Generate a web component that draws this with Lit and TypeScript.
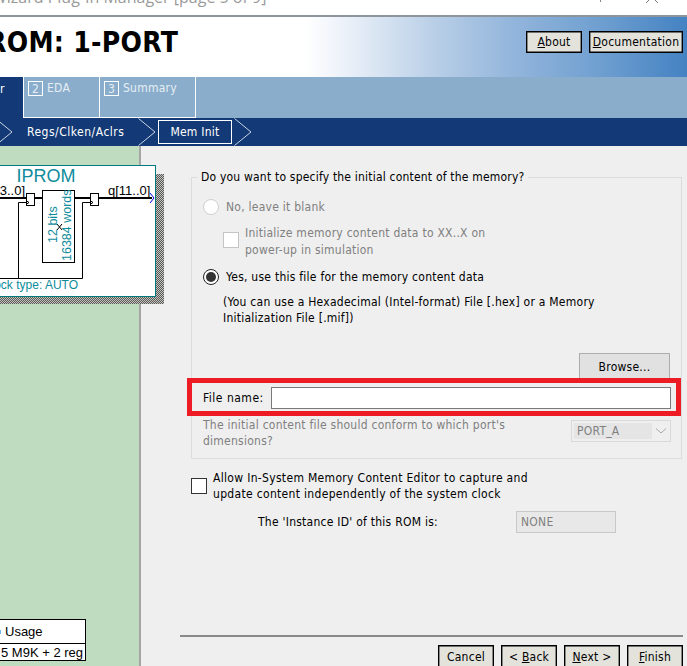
import { LitElement, html, css, svg } from "lit";
import { customElement } from "lit/decorators.js";

const chevron = svg`<svg class="chev" width="18" height="28" viewBox="0 0 18 28"><path d="M0.5 0.5 L17 14 L0.5 27.5" fill="none" stroke="#c9d3e2" stroke-width="1"/></svg>`;

@customElement("app-root")
export class AppRoot extends LitElement {
  static styles = css`
    :host { display: block; width: 687px; height: 666px; overflow: hidden; position: relative; background: #efefef;
      font: 12px/16px "DejaVu Sans Condensed", "DejaVu Sans", Tahoma, sans-serif; letter-spacing: 0.25px; color: #000; }
    * { box-sizing: border-box; }
    .titlebar { height: 17px; background: #fff; border-bottom: 2px solid #8e949c; overflow: hidden; display: flex; position: relative; }
    .titletext { font: 16px/20px "Open Sans", "Noto Sans", sans-serif; letter-spacing: 0; color: #9a9a9a; margin: -13px 0 0 -8px; white-space: nowrap; }
    .winctl { margin-left: auto; display: flex; align-items: flex-start; gap: 44px; padding-right: 29px; }
    .header { height: 60px; display: flex; align-items: center; gap: 7px; padding: 0 4px 10px 0;
      background: linear-gradient(90deg, #fff 0, #fff 305px, #eef3fa 340px, #b6cde6 440px, #94b6dc 510px, #6f9fd0 600px, #4482c2 687px); }
    .title { font: bold 28px/32px "DejaVu Sans Condensed", "DejaVu Sans", sans-serif; letter-spacing: 0.3px; margin: 1px auto 0 -13px; white-space: nowrap; }
    .btn { height: 22px; background: #e3e3dc; border: 1px solid #000; box-shadow: inset 0 0 0 0.4px #000; display: flex; align-items: center; justify-content: center; font: inherit; color: #000; padding: 0; }
    .btn u { text-underline-offset: 1px; }
    .about { width: 56px; }
    .docs { width: 94px; }
    .tabs { height: 41px; background: #8aadcb; display: flex; }
    .tab0 { width: 23px; background: #133a76; color: #fff; padding: 4px 0 0 0; }
    .tab { border: 1px solid #fff; border-width: 0 1px 1px 0; color: #e6edf4; display: flex; align-items: flex-start; padding: 4px 0 0 4px; gap: 4px; height: 41px; }
    .tab.t2 { width: 77px; border-left-width: 1px; }
    .tab.t3 { width: 96px; }
    .num { width: 15px; height: 15px; border: 1px solid #fff; display: flex; align-items: center; justify-content: center; }
    .tabname { line-height: 15px; }
    .nav { height: 28px; background: #133a76; color: #fff; display: flex; align-items: center; }
    .nav .chev { flex: none; display: block; }
    .first { margin-left: -5px; margin-right: 14px; }
    .regs { width: 111px; letter-spacing: 0.5px; }
    .mem { width: 74px; height: 24px; border: 1px solid #fff; display: flex; align-items: center; justify-content: center; margin: 0 2px 0 2px; }
    .body { height: 520px; display: grid; grid-template-columns: 139px 2px 1fr; }
    .left { background: #c0dcc0; position: relative; }
    .divider { background: #a6a6a6; }
    .diagram { position: absolute; left: 0; top: 19px; display: block; }
    .usage { position: absolute; left: -2px; top: 473px; width: 88px; height: 42px; background: #fff; border: 1px solid #000; font: 13px/20px "Liberation Sans", sans-serif; letter-spacing: 0; }
    .usage div { height: 23px; padding: 2px 0 0 6px; white-space: nowrap; }
    .usage div + div { height: 18px; padding: 0 0 0 2px; border-top: 1px solid #000; line-height: 18px; }
    .usage i { position: absolute; left: 1px; top: 10px; width: 1px; height: 4px; background: #6fb7e8; }
    .pane { display: flex; flex-direction: column; height: 520px; padding-top: 23px; }
    fieldset { margin: 0 5px 0 50px; padding: 0 10px 9px 11px; border: 1px solid #dcdcdc; height: 290px; min-width: 0; }
    legend { padding: 0 3px; margin-left: -5px; line-height: 16px; letter-spacing: 0.2px; }
    .row { display: flex; align-items: center; gap: 7px; }
    .muted { color: #808080; }
    .radio { width: 16px; height: 16px; border-radius: 50%; border: 1px solid #cfcfcf; background: #fff; flex: none; display: flex; align-items: center; justify-content: center; }
    .radio.on { border: 1px solid #222; background: #fff; }
    .radio.on::after { content: ""; width: 10px; height: 10px; border-radius: 50%; background: #333; }
    .r1 { margin-top: 14px; }
    .check { width: 16px; height: 16px; border: 1px solid #c4c4c4; background: #fff; flex: none; }
    .check.dark { border-color: #333; }
    .r2 { margin: 10px 0 0 20px; align-items: flex-start; gap: 6px; line-height: 17px; }
    .r2 .check { margin-top: 7px; }
    .r3 { margin-top: 10px; }
    .note { margin: 9px 0 0 20px; width: 440px; }
    .browse { width: 91px; height: 28px; background: #e1e1e1; border: 1px solid #adadad; margin: 27px 0 0 376px; display: flex; align-items: center; justify-content: center; }
    .filerow { display: flex; align-items: center; height: 22px; margin-top: 6px; position: relative; }
    .filelabel { width: 68px; flex: none; letter-spacing: 0.5px; }
    .file { width: 400px; height: 22px; background: #fff; border: 1px solid #7a7a7a; }
    .redbox { position: absolute; left: -16px; top: -9px; width: 494px; height: 38px; border: 5px solid #ed1c24; }
    .portrow { display: flex; justify-content: space-between; margin-top: 8px; }
    .porttext { width: 340px; }
    .select { width: 100px; height: 22px; margin: 3px 0 0 0; border: 1px solid #d9d9d9; background: #efefef; display: flex; align-items: center; padding: 2px; color: #808080; }
    .select span { width: 78px; height: 16px; background: #e5e5e5; padding-left: 3px; flex: none; }
    .select svg { margin-left: 3px; }
    .cap { margin: 11px 0 0 50px; display: flex; gap: 6px; align-items: center; letter-spacing: 0.32px; }
    .inst { display: flex; align-items: center; margin: 9px 0 0 117px; }
    .inst span { width: 258px; }
    .none { width: 100px; height: 22px; border: 1px solid #c8c8c8; background: #e8e8e8; color: #808080; padding: 2px 4px; }
    .foot { margin-top: auto; padding: 0 4px 0 39px; }
    .rule { height: 2px; background: #8a8a8a; }
    .btns { display: flex; justify-content: flex-end; gap: 7px; margin-top: 8px; height: 21px; }
    .btns .btn { width: 56px; height: 24px; }
  `;

  private diagram() {
    return svg`<svg class="diagram" width="164" height="140" viewBox="0 0 164 140">
      <defs><pattern id="dith" width="2" height="2" patternUnits="userSpaceOnUse">
        <rect width="2" height="2" fill="#c4c4bc"/><rect width="1" height="1" fill="#5a5a5a"/><rect x="1" y="1" width="1" height="1" fill="#5a5a5a"/>
      </pattern></defs>
      <rect x="0" y="9" width="164" height="130" fill="url(#dith)"/>
      <rect x="-4" y="0.5" width="159.5" height="131" fill="#fff" stroke="#007a7a"/>
      <g font-family="Liberation Sans, sans-serif" letter-spacing="0">
        <text x="46" y="17" font-size="18" fill="#0f8c9c" text-anchor="middle">IPROM</text>
        <text x="25" y="30" font-size="13" fill="#000" text-anchor="end">3..0]</text>
        <text x="108" y="30" font-size="13" fill="#000">q[11..0]</text>
        <path d="M0 33H26M34 33H42M74 33H90M98 33H152" stroke="#000" stroke-width="2"/>
        <path d="M150 28L154 33L150 38" fill="none" stroke="#0000e0"/>
        <rect x="26.5" y="28.5" width="8" height="12" fill="#fff" stroke="#000"/>
        <rect x="90.5" y="28.5" width="8" height="12" fill="#fff" stroke="#000"/>
        <rect x="42.5" y="25.5" width="32" height="72" fill="#fff" stroke="#000"/>
        <path d="M18.5 113V37.5H26M26 35.5L29 37.5L26 39.5M0 113.5H82.5V37.5H90M90 35.5L93 37.5L90 39.5" fill="none" stroke="#000"/>
        <path d="M57 59L62 65M62 59L57 65" stroke="#000"/>
        <text transform="translate(57 78) rotate(-90)" font-size="12.5" fill="#0f8c9c">12 bits</text>
        <text transform="translate(71 96) rotate(-90)" font-size="12.5" fill="#0f8c9c">16384 words</text>
        <text x="78" y="124" font-size="12" fill="#0f8c9c" text-anchor="end">ock type: AUTO</text>
      </g>
    </svg>`;
  }

  render() {
    return html`
      <div class="titlebar">
        <div class="titletext">Wizard Plug-In Manager [page 5 of 9]</div>
        <div class="winctl">
          <svg width="2" height="3" viewBox="0 0 2 3"><rect width="1" height="2" x="0" y="0" fill="#888"/></svg>
          <svg width="12" height="4" viewBox="0 0 12 4"><path d="M0 3L3 0M12 3L9 0" stroke="#777" fill="none"/></svg>
        </div>
      </div>
      <div class="header">
        <div class="title">ROM: 1-PORT</div>
        <div class="btn about"><span><u>A</u>bout</span></div>
        <div class="btn docs"><span><u>D</u>ocumentation</span></div>
      </div>
      <div class="tabs">
        <div class="tab0">r</div>
        <div class="tab t2"><span class="num">2</span><span class="tabname">EDA</span></div>
        <div class="tab t3"><span class="num">3</span><span class="tabname">Summary</span></div>
      </div>
      <div class="nav">
        <span class="first">${chevron}</span>
        <span class="regs">Regs/Clken/Aclrs</span>
        ${chevron}
        <span class="mem">Mem Init</span>
        ${chevron}
      </div>
      <div class="body">
        <div class="left">
          ${this.diagram()}
          <div class="usage"><i></i><div>Usage</div><div>5 M9K + 2 reg</div></div>
        </div>
        <div class="divider"></div>
        <div class="pane">
          <fieldset>
            <legend>Do you want to specify the initial content of the memory?</legend>
            <div class="row r1 muted"><span class="radio"></span>No, leave it blank</div>
            <div class="row r2 muted"><span class="check"></span><span>Initialize memory content data to XX..X on<br>power-up in simulation</span></div>
            <div class="row r3"><span class="radio on"></span>Yes, use this file for the memory content data</div>
            <div class="note">(You can use a Hexadecimal (Intel-format) File [.hex] or a Memory<br>Initialization File [.mif])</div>
            <div class="browse">Browse...</div>
            <div class="filerow"><span class="filelabel">File name:</span><span class="file"></span><span class="redbox"></span></div>
            <div class="portrow muted">
              <span class="porttext">The initial content file should conform to which port's<br>dimensions?</span>
              <span class="select"><span>PORT_A</span><svg width="12" height="8" viewBox="0 0 12 8"><path d="M1 1.5L6 6L11 1.5" fill="none" stroke="#a8a8a8"/></svg></span>
            </div>
          </fieldset>
          <div class="cap"><span class="check dark"></span><span>Allow In-System Memory Content Editor to capture and<br>update content independently of the system clock</span></div>
          <div class="inst"><span>The 'Instance ID' of this ROM is:</span><div class="none">NONE</div></div>
          <div class="foot">
            <div class="rule"></div>
            <div class="btns">
              <div class="btn"><span>Cancel</span></div>
              <div class="btn"><span>&lt; <u>B</u>ack</span></div>
              <div class="btn"><span><u>N</u>ext &gt;</span></div>
              <div class="btn"><span><u>F</u>inish</span></div>
            </div>
          </div>
        </div>
      </div>
    `;
  }
}
